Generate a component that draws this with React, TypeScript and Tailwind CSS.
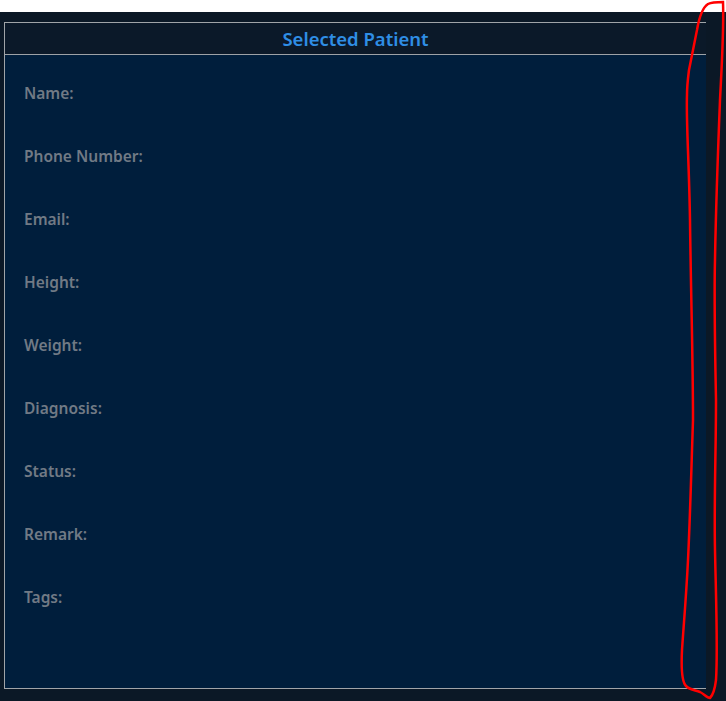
import React from "react";

const labels = [
  "Name:",
  "Phone Number:",
  "Email:",
  "Height:",
  "Weight:",
  "Diagnosis:",
  "Status:",
  "Remark:",
  "Tags:",
];

export default function App() {
  return (
    <div
      className="relative w-[726px] h-[701px] bg-white pt-[12px] overflow-hidden"
      style={{ fontFamily: '"Noto Sans", "Open Sans", sans-serif' }}
    >
      <div className="h-[689px] bg-[#0b1826] pt-[10px] pl-[4px]">
        <div className="w-[702px] h-[667px] border-l border-t border-b border-[#a0a4a8] flex flex-col">
          <div className="h-[32px] shrink-0 bg-[#0b1929] border-b border-[#9ea2a6] flex items-center justify-center pt-[2px]">
            <span className="text-[18.5px] font-semibold text-[#2f8ee5] leading-none">
              Selected Patient
            </span>
          </div>
          <div className="flex-1 bg-[#001e3c] pl-[19px] pt-[26px] flex flex-col gap-[39px]">
            {labels.map((l) => (
              <div
                key={l}
                className="text-[15.5px] font-semibold leading-[24px] text-[#717a85]"
              >
                {l}
              </div>
            ))}
          </div>
        </div>
      </div>
      <svg
        className="absolute left-0 top-0 pointer-events-none"
        width="726"
        height="701"
        viewBox="0 0 726 701"
      >
        <path
          d="M689 70 C692 55 694 45 697 30 C699 18 702 8 708 4 C712 2 718 2 723 2 C724 30 722 60 720 100 C718 150 716 200 715 260 C714 300 715 350 716 400 C716 450 714 500 715 550 C716 600 718 650 716 680 C715 688 713 695 710 698 C707 698 704 694 700 692 C695 690 690 690 686 686 C682 682 681 670 682 650 C684 620 686 600 688 560 C690 520 691 480 693 420 C693 360 691 300 690 220 C689 160 686 120 687 95 C687 85 688 78 689 70 Z"
          fill="none"
          stroke="#ff0000"
          strokeWidth="2.5"
        />
      </svg>
    </div>
  );
}
